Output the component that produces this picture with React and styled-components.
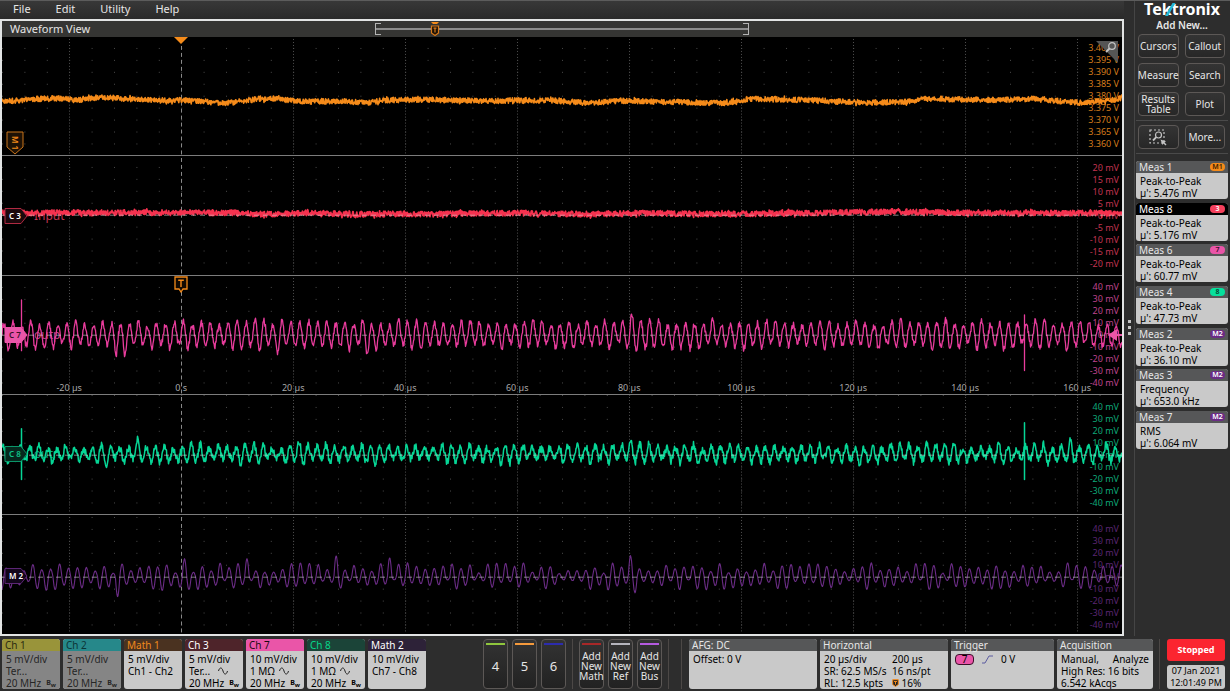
import React from 'react';
import styled, { createGlobalStyle, css } from 'styled-components';

const GlobalStyle = createGlobalStyle`
  * { box-sizing: border-box; }
  body {
    margin: 0;
    background: #2d2d2d;
    color: #e6e6e6;
    font-family: 'Noto Sans', 'Open Sans', sans-serif;
    font-size: 10px;
    line-height: 12px;
  }
  button { font: inherit; color: inherit; }
`;

/* ---------- signal data ---------- */

const WIDTH = 1120;
const HEIGHT = 119;
const MID = 59;

const random = (seed) => {
  let s = seed;
  return () => {
    s = (s * 16807) % 2147483647;
    return s / 2147483647;
  };
};

const toPath = (points) =>
  'M' + points.map(([x, y]) => `${x.toFixed(1)} ${y.toFixed(1)}`).join('L');

const levelAt = (levels, x) => {
  const next = Math.max(1, levels.findIndex(([at]) => at >= x));
  const [x0, y0] = levels[next - 1];
  const [x1, y1] = levels[next];
  return y0 + ((y1 - y0) * (x - x0)) / (x1 - x0);
};

// slow wander between levels with dense noise on top
const noisePath = (seed, levels, noise) => {
  const rnd = random(seed);
  const points = [];
  for (let x = 0; x <= WIDTH; x += 0.4) {
    const peak = rnd() > 0.95 ? 1.4 : 1;
    points.push([x, levelAt(levels, x) + (rnd() - 0.5) * 2 * noise * peak]);
  }
  return toPath(points);
};

// ripple where every half cycle has its own height
const ripplePath = ({ seed, base, period, peakAt, min, max, noise, spikes = [], bursts = [] }) => {
  const rnd = random(seed);
  const heights = Array.from({ length: 340 }, () => min + rnd() * (max - min));
  bursts.forEach(([at, height]) => {
    heights[Math.floor(((at - peakAt) / period + 40) * 2 + 0.5)] = height;
  });
  const points = [];
  for (let x = 0; x <= WIDTH; x += 0.5) {
    const turn = (x - peakAt) / period + 40;
    const height = heights[Math.floor(turn * 2 + 0.5)];
    const y = base - Math.cos(turn * 2 * Math.PI) * height + (rnd() - 0.5) * 2 * noise;
    points.push([x, y]);
    spikes.forEach(([at, top, bottom]) => {
      if (x === at) points.push([at, top], [at, bottom], [at, y]);
    });
  }
  return toPath(points);
};

const millivolts = (step) => [4, 3, 2, 1, 0, -1, -2, -3, -4].map((n) => `${n * step} mV`);

const lanes = [
  {
    id: 'M1',
    color: '#f58b1a',
    scaleColor: '#d57c1c',
    stroke: 1.6,
    scale: ['3.400 V', '3.395 V', '3.390 V', '3.385 V', '3.380 V', '3.375 V', '3.370 V', '3.365 V', '3.360 V'],
    path: noisePath(11, [
      [0, 65], [38, 62], [63, 61.5], [72, 64], [98, 60.5], [123, 62], [148, 63.5], [183, 63.5],
      [223, 66.5], [258, 62], [273, 62], [298, 65], [343, 64.5], [363, 66], [383, 63.5], [428, 63],
      [488, 64.5], [518, 63.5], [553, 64], [588, 66.5], [618, 64], [658, 65], [723, 66.5], [748, 62],
      [788, 63], [828, 64], [868, 66], [903, 65], [928, 62], [998, 63.5], [1028, 62], [1078, 66],
      [1108, 64], [1121, 61],
    ], 2.7),
  },
  {
    id: 'C3',
    color: '#f5324f',
    scaleColor: '#c03450',
    stroke: 1.7,
    scale: millivolts(5),
    name: 'Input',
    tag: { text: 'C 3', fill: '#1c080c', stroke: '#b02a42', color: '#ffffff' },
    path: noisePath(23, [
      [0, 57], [230, 57], [260, 58.5], [310, 57], [350, 58.5], [520, 57.5], [580, 58.5], [640, 57.5],
      [720, 58.5], [890, 56], [950, 57], [1121, 57.5],
    ], 2.9),
  },
  {
    id: 'C7',
    color: '#e83c9c',
    scaleColor: '#be448c',
    stroke: 1.3,
    scale: millivolts(10),
    name: 'outp',
    tag: { text: 'C 7', fill: '#ea55a8', stroke: '#ea55a8', color: '#3a1028' },
    path: ripplePath({
      seed: 37, base: 59, period: 8.969, peakAt: 199.3, min: 8, max: 15, noise: 3,
      spikes: [[19.5, 24, 75], [1022.5, 39, 95]],
      bursts: [[114, 20], [122, 21], [275, 18], [629, 21], [365, 20]],
    }),
  },
  {
    id: 'C8',
    color: '#06d696',
    scaleColor: '#0ea878',
    stroke: 1.5,
    scale: millivolts(10),
    offset: 1,
    name: 'outn',
    tag: { text: 'C 8', fill: '#06281d', stroke: '#0b9468', color: '#0fc48a' },
    path: ripplePath({
      seed: 51, base: 59, period: 8.969, peakAt: 207.3, min: 4, max: 10, noise: 3.8,
      spikes: [[19.5, 34, 85], [1022.5, 28, 85]],
      bursts: [[104, 13], [134, 14], [296, 13], [629, 14], [1067, 15]],
    }),
  },
  {
    id: 'M2',
    color: '#6b2c86',
    scaleColor: '#5a2672',
    stroke: 1.1,
    scale: millivolts(10),
    offset: 3,
    tag: { text: 'M 2', fill: '#12061a', stroke: '#5c2675', color: '#ffffff' },
    path: ripplePath({
      seed: 71, base: 62, period: 8.92, peakAt: 182.5, min: 3, max: 14, noise: 0.3,
      bursts: [[114, 20], [182.5, 18], [245, 18], [335, 21], [387, 19], [630, 21], [635, 16]],
    }),
  },
];

const times = ['-20 µs', '0 s', '20 µs', '40 µs', '60 µs', '80 µs', '100 µs', '120 µs', '140 µs', '160 µs'];

const measurements = [
  { title: 'Meas 1', source: 'M1', color: '#f58b1a', ink: '#3a2000', name: 'Peak-to-Peak', value: "µ': 5.476 mV" },
  { title: 'Meas 8', source: '3', color: '#f5405c', ink: '#ffffff', name: 'Peak-to-Peak', value: "µ': 5.176 mV", active: true },
  { title: 'Meas 6', source: '7', color: '#ea55a8', ink: '#3a1028', name: 'Peak-to-Peak', value: "µ': 60.77 mV" },
  { title: 'Meas 4', source: '8', color: '#06e09c', ink: '#04402c', name: 'Peak-to-Peak', value: "µ': 47.73 mV" },
  { title: 'Meas 2', source: 'M2', color: '#6b2c86', ink: '#ffffff', name: 'Peak-to-Peak', value: "µ': 36.10 mV" },
  { title: 'Meas 3', source: 'M2', color: '#6b2c86', ink: '#ffffff', name: 'Frequency', value: "µ': 653.0 kHz" },
  { title: 'Meas 7', source: 'M2', color: '#6b2c86', ink: '#ffffff', name: 'RMS', value: "µ': 6.064 mV" },
];

const channels = [
  { title: 'Ch 1', head: '#99943a', ink: '#2c2c10', off: true, scale: '5 mV/div', term: 'Ter...', bandwidth: '20 MHz' },
  { title: 'Ch 2', head: '#26888a', ink: '#0c3536', off: true, scale: '5 mV/div', term: 'Ter...', bandwidth: '20 MHz' },
  { title: 'Math 1', head: '#4a3220', ink: '#f08a1c', scale: '5 mV/div', term: 'Ch1 - Ch2' },
  { title: 'Ch 3', head: '#4e242a', ink: '#ffffff', scale: '5 mV/div', term: 'Ter...', wave: true, bandwidth: '20 MHz' },
  { title: 'Ch 7', head: '#ea55a8', ink: '#1a0a12', scale: '10 mV/div', term: '1 MΩ', wave: true, bandwidth: '20 MHz' },
  { title: 'Ch 8', head: '#1b4438', ink: '#06d68c', scale: '10 mV/div', term: '1 MΩ', wave: true, bandwidth: '20 MHz' },
  { title: 'Math 2', head: '#2d2238', ink: '#ffffff', scale: '10 mV/div', term: 'Ch7 - Ch8' },
];

/* ---------- components ---------- */

const App = () => (
  <>
    <GlobalStyle />
    <Screen>
      <Workspace>
        <Left>
          <Menu>
            <MenuItem>File</MenuItem>
            <MenuItem>Edit</MenuItem>
            <MenuItem>Utility</MenuItem>
            <MenuItem>Help</MenuItem>
          </Menu>
          <View>
            <ViewBar>
              <ViewTitle>Waveform View</ViewTitle>
              <Overview>
                <OverviewMarker width="10" height="14" viewBox="0 0 10 14">
                  <path d="M1 0H9L7 2H3Z" fill="#f58b1a" />
                  <path d="M1.5 4H8.5V11L5 13.5L1.5 11Z" fill="#1c1206" stroke="#d9791a" strokeWidth="1.2" />
                  <path d="M3.5 6.2H6.5M5 6V10.5" stroke="#d9791a" strokeWidth="1.2" />
                </OverviewMarker>
              </Overview>
            </ViewBar>
            <Lanes>
              {lanes.map((lane) => (
                <Lane key={lane.id} lane={lane} />
              ))}
              <ExpansionPoint width="14" height="8" viewBox="0 0 14 8">
                <path d="M0 0H14L7 7Z" fill="#f58b1a" />
              </ExpansionPoint>
              <ZoomCorner aria-label="Zoom">
                <svg width="22" height="22" viewBox="0 0 22 22">
                  <path d="M0 0H22V22Z" fill="#555" />
                  <circle cx="16" cy="5" r="3.3" fill="none" stroke="#c4c4c4" strokeWidth="1.2" />
                  <path d="M13.5 7.5L10 11" stroke="#c4c4c4" strokeWidth="1.8" />
                </svg>
              </ZoomCorner>
            </Lanes>
          </View>
        </Left>
        <Handle aria-label="Resize results">
          <i />
          <i />
          <i />
        </Handle>
        <Side>
          <Logo />
          <SideTitle>Add New...</SideTitle>
          <ButtonGrid>
            <ToolButton>Cursors</ToolButton>
            <ToolButton>Callout</ToolButton>
            <ToolButton>Measure</ToolButton>
            <ToolButton>Search</ToolButton>
            <ToolButton>Results Table</ToolButton>
            <ToolButton>Plot</ToolButton>
          </ButtonGrid>
          <ButtonGrid>
            <ToolButton aria-label="Draw a box">
              <ZoomBoxIcon />
            </ToolButton>
            <ToolButton>More...</ToolButton>
          </ButtonGrid>
          <Results>
            {measurements.map((m) => (
              <Card key={m.title}>
                <CardHead $active={m.active}>
                  {m.title}
                  <Source $color={m.color} $ink={m.ink}>{m.source}</Source>
                </CardHead>
                <MeasBody>
                  <div>{m.name}</div>
                  <div>{m.value}</div>
                </MeasBody>
              </Card>
            ))}
          </Results>
        </Side>
      </Workspace>
      <Settings>
        <Channels>
          {channels.map((ch) => (
            <Card key={ch.title}>
              <ChannelHead $color={ch.head} $ink={ch.ink}>{ch.title}</ChannelHead>
              <SettingBody $off={ch.off}>
                <div>{ch.scale}</div>
                <Row>
                  <Term>{ch.term}</Term>
                  {ch.wave && (
                    <svg width="10" height="8" viewBox="0 0 10 8">
                      <path d="M.5 4C1.5 0 4 0 5 4S8.5 8 9.5 4" fill="none" stroke="#222" />
                    </svg>
                  )}
                </Row>
                {ch.bandwidth && (
                  <Row $spread>
                    {ch.bandwidth}
                    <Bandwidth>B<sub>w</sub></Bandwidth>
                  </Row>
                )}
              </SettingBody>
            </Card>
          ))}
        </Channels>
        <Slots>
          <SlotButton $color="#8fc63d" $big>4</SlotButton>
          <SlotButton $color="#f59a3c" $big>5</SlotButton>
          <SlotButton $color="#2c2cae" $big>6</SlotButton>
        </Slots>
        <Divider />
        <Slots>
          <SlotButton $color="#a82828">Add New Math</SlotButton>
          <SlotButton $color="#b4b4bc">Add New Ref</SlotButton>
          <SlotButton $color="#b45ae0">Add New Bus</SlotButton>
        </Slots>
        <Divider />
        <Divider $wide />
        <Panels>
          <Card>
            <CardHead>AFG: DC</CardHead>
            <SettingBody>Offset: 0 V</SettingBody>
          </Card>
          <Card>
            <CardHead>Horizontal</CardHead>
            <HorizontalBody>
              <span>20 µs/div</span>
              <span>200 µs</span>
              <span>SR: 62.5 MS/s</span>
              <span>16 ns/pt</span>
              <span>RL: 12.5 kpts</span>
              <span>
                <svg width="7" height="8" viewBox="0 0 7 8">
                  <path d="M.7.7H6.3V5.5L3.5 7.5L.7 5.5Z" fill="#222" stroke="#f58b1a" />
                  <path d="M2 2.5H5M3.5 2.5V5.5" stroke="#f58b1a" />
                </svg>{' '}
                16%
              </span>
            </HorizontalBody>
          </Card>
          <Card>
            <CardHead>Trigger</CardHead>
            <SettingBody>
              <TriggerRow>
                <TriggerSource>7</TriggerSource>
                <svg width="11" height="9" viewBox="0 0 11 9">
                  <path d="M0 8H3L7 1H11" fill="none" stroke="#5a5aa0" />
                </svg>
                0 V
              </TriggerRow>
            </SettingBody>
          </Card>
          <Card>
            <CardHead>Acquisition</CardHead>
            <SettingBody>
              <Row $spread>
                <span>Manual,</span>
                <span>Analyze</span>
              </Row>
              <div>High Res: 16 bits</div>
              <div>6.542 kAcqs</div>
            </SettingBody>
          </Card>
        </Panels>
        <Divider />
        <Status>
          <StopButton>Stopped</StopButton>
          <Clock>
            <div>07 Jan 2021</div>
            <div>12:01:49 PM</div>
          </Clock>
        </Status>
      </Settings>
    </Screen>
  </>
);

const Lane = ({ lane }) => {
  const offset = lane.offset || 0;
  const rows = [-5, -4, -3, -2, -1, 0, 1, 2, 3, 4].map((n) => MID + offset + n * 12);
  return (
    <LaneBox>
      <Plot viewBox={`0 0 ${WIDTH} ${HEIGHT}`} preserveAspectRatio="none">
        <g shapeRendering="crispEdges">
          {rows.map((y) => (
            <path key={y} d={`M0 ${y + 0.5}H${WIDTH}`} stroke="#4a4a4a" strokeDasharray="1 21.4" />
          ))}
          {times.map((t, i) => (
            <path
              key={t}
              d={`M${67.5 + i * 112} 2V${HEIGHT}`}
              stroke={i === 1 ? '#8a8a8a' : '#505050'}
              strokeDasharray={i === 1 ? '4 3' : '1 2'}
            />
          ))}
        </g>
      </Plot>
      {lane.name && <LaneName $color={lane.scaleColor}>{lane.name}</LaneName>}
      <Scale $color={lane.scaleColor} $offset={offset}>
        {lane.scale.map((label) => (
          <li key={label}>{label}</li>
        ))}
      </Scale>
      <Plot viewBox={`0 0 ${WIDTH} ${HEIGHT}`} preserveAspectRatio="none">
        <path
          d={lane.path}
          fill="none"
          stroke={lane.color}
          strokeWidth={lane.stroke}
          strokeLinejoin="round"
        />
        {lane.tag && (
          <path
            d={`M0 ${MID + offset + 0.5}H${WIDTH}`}
            stroke="#d0d0d0"
            strokeOpacity="0.6"
            strokeDasharray="5 4"
            shapeRendering="crispEdges"
          />
        )}
      </Plot>
      {lane.tag ? (
        <LaneTag>
          <svg width="24" height="17" viewBox="0 0 24 17">
            <path d="M1 1H17L23 8.5L17 16H1Z" fill={lane.tag.fill} stroke={lane.tag.stroke} />
            <TagText x="5" y="11" fill={lane.tag.color}>{lane.tag.text}</TagText>
          </svg>
        </LaneTag>
      ) : (
        <MathTag width="18" height="24" viewBox="0 0 18 24">
          <path d="M1 1H17V16L9 23L1 16Z" fill="#1e1206" stroke="#c9741a" />
          <TagText x="5" y="-6" transform="rotate(90)" fill="#f58b1a">M 1</TagText>
        </MathTag>
      )}
      {lane.id === 'C7' && (
        <>
          <TriggerTag width="14" height="17" viewBox="0 0 14 17">
            <path d="M1 1H13V13H9L7 16L5 13H1Z" fill="#120a02" stroke="#f58b1a" strokeWidth="1.3" />
            <path d="M4.2 4.2H9.8M7 4V11" stroke="#f58b1a" strokeWidth="1.4" />
          </TriggerTag>
          <LevelArrow width="14" height="12" viewBox="0 0 14 12">
            <path d="M0 6L9 0V12ZM8 5H14V7H8Z" fill="#ea55a8" />
          </LevelArrow>
          <TimeAxis>
            {times.map((t) => (
              <li key={t}>{t}</li>
            ))}
          </TimeAxis>
        </>
      )}
    </LaneBox>
  );
};

const Logo = () => (
  <LogoBox>
    Te
    <LogoK>
      k
      <svg width="11" height="13" viewBox="0 0 11 13">
        <path d="M0 13L7.5 0H10.5L3 13Z" fill="#22b8d8" />
      </svg>
    </LogoK>
    tronix
  </LogoBox>
);

const ZoomBoxIcon = () => (
  <svg width="18" height="17" viewBox="0 0 18 17" fill="none" stroke="#c4c4c4">
    <path d="M1 1H15V14H1Z" strokeDasharray="2 2" strokeWidth="1.2" />
    <circle cx="9.5" cy="6" r="3" strokeWidth="1.2" />
    <path d="M7.3 8.2L4 11.5" strokeWidth="1.8" />
    <path d="M11.5 10.5L17 12.5L15.5 13.5L17.5 15.5L16.5 16.5L14.5 14.5L13.5 16Z" fill="#c4c4c4" stroke="none" />
  </svg>
);

/* ---------- frame ---------- */

const Screen = styled.main`
  display: flex;
  flex-direction: column;
  min-height: 100vh;
  border-top: 1px solid #5c5c5c;
`;

const Workspace = styled.div`
  flex: 1;
  display: flex;
`;

const Left = styled.div`
  flex: 1;
  min-width: 0;
  display: flex;
  flex-direction: column;
`;

const Menu = styled.nav`
  display: flex;
  align-items: center;
  gap: 25px;
  height: 18px;
  padding: 0 13px 3px;
  background: linear-gradient(#383838, #2a2a2a);
`;

const MenuItem = styled.button`
  padding: 0;
  border: 0;
  background: none;
  font-size: 11px;
`;

const View = styled.section`
  flex: 1;
  display: flex;
  flex-direction: column;
  border: 2px solid #e2e4e4;
`;

const ViewBar = styled.header`
  display: grid;
  grid-template-columns: 1fr 1fr 1fr;
  align-items: center;
  height: 16px;
  background: #353533;
`;

const ViewTitle = styled.h1`
  margin: 0;
  padding-left: 8px;
  font-size: 11px;
  font-weight: 400;
  line-height: 14px;
`;

const Overview = styled.div`
  position: relative;
  height: 12px;
  background: linear-gradient(#8c8c8c, #8c8c8c) center / 100% 2px no-repeat;

  &::before,
  &::after {
    content: '';
    position: absolute;
    top: 0;
    bottom: 0;
    width: 5px;
    border: 1px solid #b4b4b4;
  }
  &::before { left: 0; border-right: 0; }
  &::after { right: 0; border-left: 0; }
`;

const OverviewMarker = styled.svg`
  position: absolute;
  top: -1px;
  left: 16%;
  transform: translateX(-50%);
`;

const Lanes = styled.div`
  position: relative;
  flex: 1;
  display: flex;
  flex-direction: column;
  background: #000;
`;

/* ---------- lanes ---------- */

const LaneBox = styled.section`
  position: relative;
  flex: 1;
  min-height: 100px;
  border-bottom: 1px solid #7c7c7c;

  &:last-of-type { border-bottom-color: #000; }
`;

const Plot = styled.svg`
  position: absolute;
  inset: 0;
  width: 100%;
  height: 100%;
`;

const Scale = styled.ul`
  position: absolute;
  top: ${(p) => p.$offset}px;
  right: 3px;
  bottom: ${(p) => -p.$offset}px;
  display: flex;
  flex-direction: column;
  justify-content: center;
  margin: 0;
  padding: 0;
  list-style: none;
  text-align: right;
  font-size: 9px;
  line-height: 12px;
  color: ${(p) => p.$color};
`;

const TimeAxis = styled.ul`
  position: absolute;
  left: 1%;
  bottom: 0;
  width: 100%;
  display: flex;
  margin: 0;
  padding: 0;
  list-style: none;
  font-size: 9px;
  color: #a8a8a8;

  li {
    width: 10%;
    text-align: center;
  }
`;

const LaneName = styled.span`
  position: absolute;
  left: 32px;
  top: 50%;
  transform: translateY(-50%);
  font-size: 12px;
  color: ${(p) => p.$color};
`;

const LaneTag = styled.div`
  position: absolute;
  left: 2px;
  top: 50%;
  transform: translateY(-50%);
  display: flex;

  ${LaneBox}:last-of-type & { margin-top: 2px; }
`;

const TagText = styled.text`
  font-size: 8px;
  font-weight: 600;
`;

const MathTag = styled.svg`
  position: absolute;
  left: 4px;
  bottom: 0;
`;

const TriggerTag = styled.svg`
  position: absolute;
  left: 16%;
  top: 0;
  transform: translateX(-50%);
`;

const LevelArrow = styled.svg`
  position: absolute;
  right: 0;
  top: 50%;
  transform: translateY(-50%);
`;

const ExpansionPoint = styled.svg`
  position: absolute;
  left: 16%;
  top: 0;
  transform: translateX(-50%);
`;

const ZoomCorner = styled.button`
  position: absolute;
  top: 4px;
  right: 4px;
  display: flex;
  padding: 0;
  border: 0;
  background: none;
`;

/* ---------- side panel ---------- */

const Handle = styled.button`
  display: flex;
  flex-direction: column;
  align-items: center;
  justify-content: center;
  gap: 3px;
  width: 10px;
  padding: 18px 0 0;
  border: 0;
  background: none;

  i {
    width: 3px;
    height: 3px;
    background: #c4c4c4;
  }
`;

const Side = styled.aside`
  width: 96px;
  padding: 0 2px 0 1px;
  border-left: 1px solid #454545;
`;

const LogoBox = styled.div`
  display: flex;
  justify-content: center;
  height: 17px;
  font-size: 16px;
  font-weight: 700;
  line-height: 17px;
  color: #fff;
`;

const LogoK = styled.span`
  position: relative;

  svg {
    position: absolute;
    left: 3px;
    top: 2px;
  }
`;

const SideTitle = styled.h2`
  margin: 0;
  text-align: center;
  font-size: 10px;
  font-weight: 600;
  line-height: 14px;
`;

const ButtonGrid = styled.div`
  display: grid;
  grid-template-columns: 1fr 1fr;
  gap: 5px 6px;
  padding: 2px 3px 4px 2px;
  border-bottom: 1px solid #4a4a4a;

  & + & { padding-top: 4px; }
`;

const ToolButton = styled.button`
  display: flex;
  align-items: center;
  justify-content: center;
  height: 24px;
  min-width: 0;
  padding: 0;
  border: 1px solid #5c5856;
  border-radius: 4px;
  background: linear-gradient(#343434, #272727);
  line-height: 10px;
`;

const Results = styled.div`
  display: flex;
  flex-direction: column;
  justify-content: space-between;
  min-height: 288px;
  margin-top: 7px;
`;

const Card = styled.article`
  overflow: hidden;
  border-radius: 3px;
  background: #c9c9c9;
  color: #000;
`;

const CardHead = styled.header`
  display: flex;
  align-items: center;
  justify-content: space-between;
  height: 12px;
  padding: 0 3px;
  line-height: 12px;
  background: #565758;
  color: #e6e6e6;

  ${(p) => p.$active && css`
    background: #000;
    color: #fff;
  `}
`;

const Source = styled.span`
  width: 15px;
  height: 8px;
  border-radius: 4px;
  text-align: center;
  font-size: 7px;
  font-weight: 600;
  line-height: 8px;
  color: ${(p) => p.$ink};
  background: ${(p) => p.$color};
`;

const MeasBody = styled.div`
  height: 26px;
  padding: 2px 4px 0;
`;

/* ---------- settings bar ---------- */

const Settings = styled.footer`
  display: flex;
  align-items: stretch;
  height: 55px;
  padding: 3px 5px 2px 2px;
`;

const Channels = styled.div`
  flex: 1;
  display: grid;
  grid-template-columns: repeat(7, 58px);
  gap: 3px;
`;

const ChannelHead = styled(CardHead)`
  background: ${(p) => p.$color};
  color: ${(p) => p.$ink};
`;

const SettingBody = styled.div`
  height: 38px;
  padding: 2px 4px 0;

  ${(p) => p.$off && css`
    background: #858585;
    color: #262626;
  `}
`;

const Row = styled.div`
  display: flex;
  align-items: center;
  justify-content: ${(p) => (p.$spread ? 'space-between' : 'flex-start')};
`;

const Term = styled.span`
  min-width: 29px;
  white-space: nowrap;
`;

const Bandwidth = styled.span`
  font-size: 7px;
  font-weight: 700;
  line-height: 8px;

  sub {
    font-size: 6px;
    line-height: 0;
  }
`;

const Slots = styled.div`
  display: flex;
  gap: 4px;
  margin: 0 6px;
`;

const SlotButton = styled.button`
  display: flex;
  flex-direction: column;
  align-items: center;
  justify-content: flex-start;
  width: 25px;
  padding: 3px 0 0;
  border: 1px solid #5c5856;
  border-radius: 4px;
  background: linear-gradient(#333, #222);
  font-size: ${(p) => (p.$big ? '13px' : '10px')};
  line-height: 10px;

  &::before {
    content: '';
    flex: none;
    width: 19px;
    height: 2px;
    margin-bottom: ${(p) => (p.$big ? '16px' : '6px')};
    background: ${(p) => p.$color};
  }
`;

const Divider = styled.i`
  width: 1px;
  margin-left: ${(p) => (p.$wide ? '12px' : '0')};
  background: #4c4846;
`;

const Panels = styled.div`
  display: grid;
  grid-template-columns: 128px 128px 103px 96px;
  gap: 3px;
  margin: 0 6px 0 7px;
`;

const HorizontalBody = styled(SettingBody)`
  display: grid;
  grid-template-columns: 68px 1fr;
  grid-auto-rows: 12px;
  white-space: nowrap;
`;

const TriggerRow = styled.div`
  display: flex;
  align-items: center;
  gap: 8px;
`;

const TriggerSource = styled.span`
  width: 19px;
  height: 11px;
  border: 1px solid #3a1028;
  border-radius: 4px;
  text-align: center;
  line-height: 9px;
  background: #ea55a8;
`;

const Status = styled.div`
  display: flex;
  flex-direction: column;
  justify-content: space-between;
  width: 58px;
  margin-left: 7px;
`;

const StopButton = styled.button`
  height: 22px;
  padding: 0;
  border: 0;
  border-radius: 3px;
  background: #fb2530;
  color: #fff;
  font-size: 9px;
  font-weight: 700;
`;

const Clock = styled.div`
  border-radius: 3px;
  background: #c9c9c9;
  color: #000;
  text-align: center;
  font-size: 9px;
  line-height: 12px;
  white-space: nowrap;
`;

export default App;
